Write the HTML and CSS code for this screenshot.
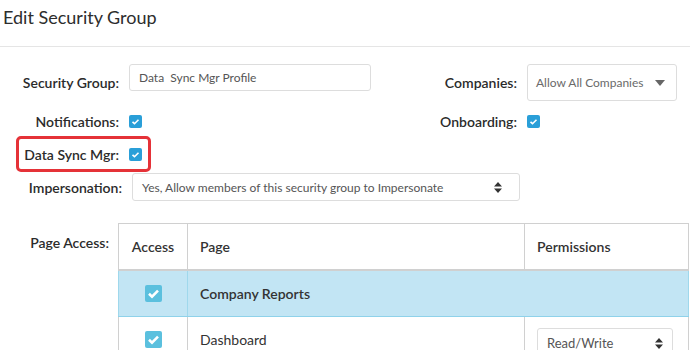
FILE: index.html
```html
<!DOCTYPE html>
<html lang="en">
<head>
  <meta charset="UTF-8">
  <title>Edit Security Group</title>
  <link rel="stylesheet" href="styles.css">
</head>
<body>
  <div class="page-header">
    <h1>Edit Security Group</h1>
  </div>

  <div class="form">
    <div class="row row-top">
      <div class="field">
        <label class="label">Security Group:</label>
        <div class="input">Data&nbsp; Sync Mgr Profile</div>
      </div>
      <div class="field right">
        <label class="label label-right">Companies:</label>
        <div class="select select-companies">
          <span>Allow All Companies</span>
          <svg width="10" height="6" viewBox="0 0 10 6"><path d="M0 0h10L5 6z" fill="#666"/></svg>
        </div>
      </div>
    </div>

    <div class="row row-check">
      <div class="field">
        <label class="label">Notifications:</label>
        <span class="check"><svg width="13" height="13" viewBox="0 0 13 13"><path d="M3.5 6.8l2 1.9 4-4" fill="none" stroke="#fff" stroke-width="1.6"/></svg></span>
      </div>
      <div class="field right">
        <label class="label label-right">Onboarding:</label>
        <span class="check"><svg width="13" height="13" viewBox="0 0 13 13"><path d="M3.5 6.8l2 1.9 4-4" fill="none" stroke="#fff" stroke-width="1.6"/></svg></span>
      </div>
    </div>

    <div class="row">
      <div class="highlight">
        <label class="label label-hl">Data Sync Mgr:</label>
        <span class="check"><svg width="13" height="13" viewBox="0 0 13 13"><path d="M3.5 6.8l2 1.9 4-4" fill="none" stroke="#fff" stroke-width="1.6"/></svg></span>
      </div>
    </div>

    <div class="row row-imp">
      <label class="label label-imp">Impersonation:</label>
      <div class="select select-imp">
        <span>Yes, Allow members of this security group to Impersonate</span>
        <svg width="8" height="11" viewBox="0 0 8 11"><path d="M0 4.5h8L4 0zM0 6.5h8L4 11z" fill="#333"/></svg>
      </div>
    </div>

    <div class="row row-pages">
      <label class="label label-pages">Page Access:</label>
      <table class="pages">
        <thead>
          <tr>
            <th class="col-access">Access</th>
            <th class="col-page">Page</th>
            <th class="col-perm">Permissions</th>
          </tr>
        </thead>
        <tbody>
          <tr class="group">
            <td class="col-access"><span class="check check-lg"><svg width="17" height="17" viewBox="0 0 17 17"><path d="M4 8.8l3 2.8 6-6" fill="none" stroke="#fff" stroke-width="2.6"/></svg></span></td>
            <td class="group-name" colspan="2">Company Reports</td>
          </tr>
          <tr class="item">
            <td class="col-access"><span class="check check-lg"><svg width="17" height="17" viewBox="0 0 17 17"><path d="M4 8.8l3 2.8 6-6" fill="none" stroke="#fff" stroke-width="2.6"/></svg></span></td>
            <td class="item-name">Dashboard</td>
            <td>
              <div class="select select-perm">
                <span>Read/Write</span>
                <svg width="8" height="11" viewBox="0 0 8 11"><path d="M0 4.5h8L4 0zM0 6.5h8L4 11z" fill="#333"/></svg>
              </div>
            </td>
          </tr>
        </tbody>
      </table>
    </div>
  </div>
</body>
</html>
```

FILE: styles.css
```css
body {
  margin: 0;
  font-family: Lato, "Open Sans", sans-serif;
  color: #333;
  background-color: #fff;
  overflow: hidden;
}

.page-header {
  height: 46px;
  border-bottom: 1px solid #e5e5e5;
  padding: 0 3px;
}

.page-header h1 {
  margin: 0;
  padding-top: 6px;
  font-size: 18px;
  font-weight: normal;
  line-height: 22px;
  color: #2d2d2d;
}

.form {
  padding-top: 17px;
}

.row {
  display: flex;
  align-items: center;
}

.field {
  display: flex;
  align-items: center;
}

.right {
  width: 260px;
  margin-left: auto;
  margin-right: 13px;
}

.label {
  flex-shrink: 0;
  width: 119px;
  margin-right: 10px;
  text-align: right;
  font-size: 14px;
  font-weight: 600;
  line-height: 17px;
  color: #2b2b2b;
}

.label-right {
  width: 100px;
}

.row-top {
  align-items: flex-start;
  height: 37px;
}

.row-top .field:first-child {
  align-items: flex-start;
}

.row-top .field:first-child .label {
  padding-top: 10px;
}

.input {
  box-sizing: border-box;
  width: 242px;
  height: 27px;
  padding: 0 9px;
  border: 1px solid #ddd;
  border-radius: 3px;
  font-size: 12px;
  line-height: 25px;
  color: #555;
}

.select {
  box-sizing: border-box;
  display: flex;
  align-items: center;
  justify-content: space-between;
  border: 1px solid #ddd;
  border-radius: 3px;
  font-size: 12px;
  color: #555;
  background-color: #fff;
}

.select-companies {
  width: 150px;
  height: 37px;
  padding: 0 11px 0 8px;
  color: #6a6a6a;
}

.row-check {
  height: 26px;
  margin-top: 7px;
}

.check {
  display: inline-flex;
  flex-shrink: 0;
  width: 13px;
  height: 13px;
  border-radius: 2px;
  background-color: #2a9fd8;
}

.check-lg {
  width: 17px;
  height: 17px;
  background-color: #5bc0de;
}

.highlight {
  display: flex;
  align-items: center;
  height: 30px;
  margin-top: 2px;
  margin-left: 16px;
  padding-right: 6px;
  border: 3px solid #e53238;
  border-radius: 5px;
}

.label-hl {
  width: 100px;
}

.row-imp {
  margin-top: 1px;
}

.label-imp {
  width: 122px;
}

.select-imp {
  width: 388px;
  height: 28px;
  padding: 0 17px 0 9px;
}

.row-pages {
  align-items: flex-start;
  margin-top: 22px;
}

.label-pages {
  width: 109px;
  margin-right: 9px;
  padding-top: 11px;
}

.pages {
  width: 571px;
  border-collapse: collapse;
  font-size: 14px;
}

.pages th,
.pages td {
  box-sizing: border-box;
  border: 1px solid #d0d0d0;
  padding: 0 12px;
  text-align: left;
  vertical-align: middle;
}

.pages th {
  height: 46px;
  font-weight: 600;
  border-bottom: 2px solid #d0d0d0;
}

.pages td {
  height: 47px;
}

.pages .col-access {
  width: 69px;
  text-align: center;
}

.pages .col-page {
  width: 337px;
}

.pages td.col-access {
  padding-top: 3px;
}

.group td {
  background-color: #c2e5f4;
  border-left-color: #9fd8ec;
  border-right-color: #9fd8ec;
  border-bottom-color: #8fd2ea;
}

.group-name {
  font-weight: 600;
}

.item td {
  vertical-align: top;
}

.pages .item td.col-access {
  padding-top: 14px;
}

.pages .item td.item-name {
  padding-top: 14px;
  line-height: 17px;
}

.select-perm {
  width: 136px;
  height: 30px;
  padding: 0 9px;
  margin-top: 11px;
  font-size: 13px;
}
```
